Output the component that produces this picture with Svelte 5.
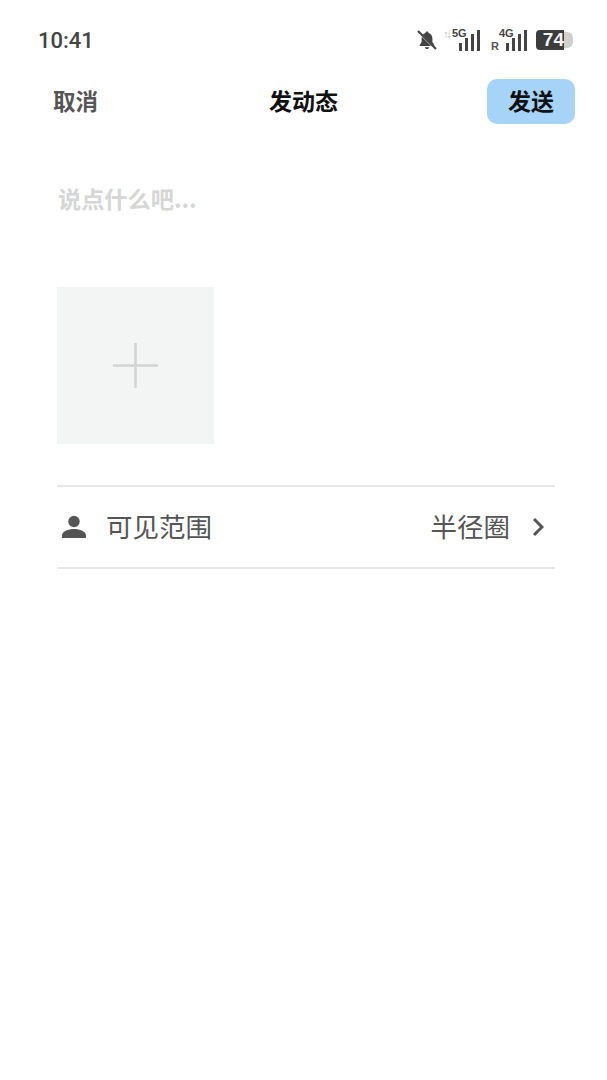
<script>
  const signals = [
    { label: '5G', side: '', dot: true },
    { label: '4G', side: 'R', dot: false }
  ]
  const bars = [8, 13, 17, 21]
</script>

<div class="page">
  <div class="status">
    <span class="time">10:41</span>
    <div class="status-right">
      <svg class="bell" width="22" height="22" viewBox="0 0 22 22">
        <path d="M11 2.500c-.9 0-1.500.6-1.600 1.400C7 4.600 5.600 6.700 5.600 9.500v3.500L3.700 16v1h14.600v-1l-1.900-3V9.500c0-2.800-1.400-4.900-3.800-5.600-.1-.8-.7-1.400-1.600-1.400z" fill="#444"/>
        <path d="M8.800 18.300h4.400c-.2 1.100-1.100 1.800-2.200 1.800s-2-.7-2.200-1.800z" fill="#444"/>
        <path d="M3 3.500l17 17" stroke="#fff" stroke-width="2"/>
        <path d="M2 2l18 18" stroke="#444" stroke-width="2.200"/>
      </svg>
      {#each signals as s}
        <div class="signal">
          {#if s.dot}<span class="updown">⇅</span>{/if}
          {#if s.side}<span class="side">{s.side}</span>{/if}
          <span class="net">{s.label}</span>
          <div class="bars">
            {#each bars as h}
              <i style="height: {h}px"></i>
            {/each}
          </div>
        </div>
      {/each}
      <div class="battery">
        <span class="level">74</span>
        <span class="rest"></span>
      </div>
    </div>
  </div>

  <header class="nav">
    <span class="cancel">取消</span>
    <span class="title">发动态</span>
    <button class="send">发送</button>
  </header>

  <div class="composer">
    <div class="placeholder">说点什么吧...</div>
    <div class="add">
      <svg width="47" height="47" viewBox="0 0 47 47">
        <path d="M23.500 1v45M1 23.500h45" stroke="#d2d3d3" stroke-width="2.500" fill="none"/>
      </svg>
    </div>
  </div>

  <div class="row">
    <svg class="person" width="26" height="24" viewBox="0 0 26 24">
      <circle cx="13" cy="6.500" r="5.700" fill="#555"/>
      <path d="M1 23v-2.500c0-4 6-6.500 12-6.500s12 2.500 12 6.500V23z" fill="#555"/>
    </svg>
    <span class="label">可见范围</span>
    <span class="value">半径圈</span>
    <svg class="chev" width="12" height="20" viewBox="0 0 12 20">
      <path d="M2 2l8 8-8 8" stroke="#555" stroke-width="3" fill="none"/>
    </svg>
  </div>
</div>

<style>
  :global(body) {
    background: #fff;
  }

  .page {
    height: 1080px;
    background: #fff;
    font-family: "Noto Sans CJK SC", "Noto Sans", sans-serif;
    overflow: hidden;
  }

  .status {
    height: 79px;
    box-sizing: border-box;
    padding: 27px 33px 0 38px;
    display: flex;
    justify-content: space-between;
    align-items: flex-start;
  }

  .time {
    font-family: Roboto, sans-serif;
    font-size: 22px;
    line-height: 28px;
    font-weight: 500;
    color: #444;
  }

  .status-right {
    display: flex;
    align-items: center;
    gap: 9px;
    height: 26px;
  }

  .bell {
    margin-right: -5px;
  }

  .signal {
    position: relative;
    width: 38px;
    height: 24px;
  }

  .bars {
    position: absolute;
    right: 0;
    bottom: 1px;
    display: flex;
    align-items: flex-end;
    gap: 2.500px;
  }

  .bars i {
    display: block;
    width: 3.500px;
    background: #444;
  }

  .net {
    position: absolute;
    left: 10px;
    top: 0;
    font-family: "Liberation Sans", sans-serif;
    font-size: 11px;
    line-height: 11px;
    font-weight: 700;
    color: #444;
  }

  .updown {
    position: absolute;
    left: 2px;
    top: 2px;
    font-size: 7px;
    line-height: 8px;
    color: #bbb;
  }

  .side {
    position: absolute;
    left: 2px;
    bottom: 0;
    font-family: "Liberation Sans", sans-serif;
    font-size: 11px;
    line-height: 11px;
    font-weight: 700;
    color: #555;
  }

  .battery {
    display: flex;
    align-items: center;
    width: 38px;
    height: 20px;
  }

  .level {
    width: 28px;
    height: 20px;
    background: #3d3d3d;
    border-radius: 4px 0 0 4px;
    color: #f4f4f4;
    font-family: "Liberation Sans", sans-serif;
    font-size: 19px;
    line-height: 20px;
    font-weight: 700;
    text-align: right;
  }

  .rest {
    width: 9px;
    height: 16px;
    background: #d0d0d0;
    border-radius: 0 6px 6px 0;
  }

  .nav {
    height: 45px;
    padding: 0 32px;
    display: grid;
    grid-template-columns: 1fr auto 1fr;
    align-items: center;
  }

  .cancel {
    padding-left: 21px;
    font-size: 22.500px;
    line-height: 30px;
    margin-top: -4px;
    font-weight: 700;
    color: #555;
  }

  .title {
    font-size: 23px;
    line-height: 30px;
    margin-top: -4px;
    font-weight: 700;
    color: #111;
  }

  .send {
    justify-self: end;
    width: 88px;
    height: 45px;
    padding: 0 0 3px;
    border: none;
    border-radius: 10px;
    background: #a6d4f8;
    color: #111;
    font-family: inherit;
    font-size: 23px;
    font-weight: 700;
  }

  .composer {
    padding: 0 57px;
  }

  .placeholder {
    margin-top: 58px;
    height: 105px;
    padding-left: 1px;
    font-size: 23.200px;
    line-height: 32px;
    font-weight: 700;
    color: #d6d6d6;
  }

  .add {
    width: 157px;
    height: 157px;
    background: #f3f4f4;
    display: flex;
    align-items: center;
    justify-content: center;
  }

  .row {
    margin: 41px 52px 0 57px;
    height: 80px;
    border-top: 2px solid #e8e8e8;
    border-bottom: 2px solid #e8e8e8;
    display: flex;
    align-items: center;
    color: #555;
    font-size: 26.500px;
    line-height: 36px;
  }

  .person {
    margin-left: 4px;
  }

  .label {
    margin-left: 19px;
    flex: 1;
    margin-top: -2px;
  }

  .value {
    margin-top: -2px;
  }

  .chev {
    margin-left: 22px;
    margin-right: 11px;
  }
</style>
